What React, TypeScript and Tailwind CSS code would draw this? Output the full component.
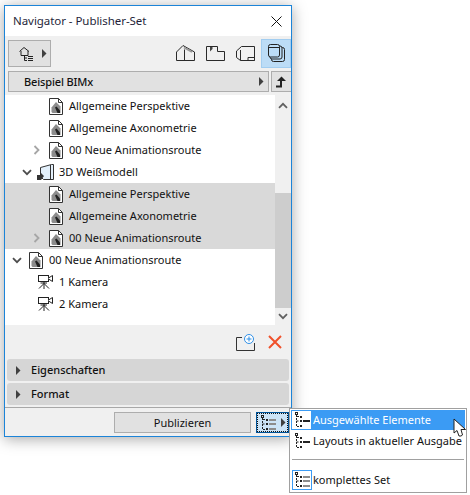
import React from 'react';

const DocIcon = () => (
  <svg width="14" height="17" viewBox="0 0 14 17" fill="none">
    <path d="M.5.5H9.5L13.5 4.5V16.5H.5Z" fill="#fff" stroke="#333" />
    <path d="M9.5.5V4.5H13.5" stroke="#333" />
    <path d="M2.5 14V9.5L7 4L11.5 8.5V15H3.5Z" fill="#8c8c8c" />
    <path d="M6 9.5L7.5 8.5L11 12.5V15H8.5Z" fill="#222" />
  </svg>
);

const ModelIcon = () => (
  <svg width="18" height="17" viewBox="0 0 18 17" fill="none" className="-ml-[3px]">
    <path d="M4.5 3.5L15.5.5H17.5V15.5H7.5L4.5 12.5Z" fill="#e3f0fb" stroke="#333" />
    <path d="M14.5 1V15" stroke="#333" />
    <path d="M1 11H5V9L8 12L5 16H1Z" fill="#333" />
  </svg>
);

const CameraIcon = () => (
  <svg width="17" height="16" viewBox="0 0 17 16" fill="none" className="-ml-[2px]">
    <rect x="1.5" y="1.5" width="10" height="6" stroke="#222" fill="#fff" />
    <path d="M11.5 4L15.5 1.5V7.5L11.5 5" stroke="#222" fill="#fff" />
    <path d="M7 8V15M7 9.5L2 14.5M7 9.5L12 14.5" stroke="#222" />
    <path d="M3.5 9H10" stroke="#222" />
  </svg>
);

const ChevronRight = () => (
  <svg width="8" height="10" viewBox="0 0 8 10" fill="none" className="ml-[1px]">
    <path d="M1.5 1L5.5 5L1.5 9" stroke="#a6a6a6" strokeWidth="1.8" />
  </svg>
);

const ChevronDown = () => (
  <svg width="10" height="7" viewBox="0 0 10 7" fill="none">
    <path d="M1 1.2L5 5.2L9 1.2" stroke="#4d4d4d" strokeWidth="1.8" />
  </svg>
);

const Tri = ({ className = '' }: { className?: string }) => (
  <svg width="5" height="9" viewBox="0 0 5 9" className={className}>
    <path d="M0 0L4.5 4.5L0 9Z" fill="#404040" />
  </svg>
);

// small tree-list glyph, used in the publish button and in the popup
const ListIcon = ({ dark = false }: { dark?: boolean }) => {
  const line = '#222';
  return (
    <svg width="16" height="16" viewBox="0 0 16 16" fill="none">
      <rect x="1.5" y=".5" width="2" height="2" stroke={line} />
      <path d="M2.5 3V14.5H5M2.5 9H5" stroke={line} strokeDasharray="2 1" />
      <path d="M2 4.5H5" stroke={line} />
      <rect x="6" y="4" width="2" height="2" fill={line} />
      <rect x="6" y="8" width="2" height="2" fill={line} />
      <rect x="6" y="13" width="2" height="2" fill={line} />
      {dark ? (
        <path d="M9 9H16" stroke="#222" strokeWidth="2" />
      ) : (
        <path d="M9 5H16M9 9H16M9 14H16" stroke="#8c8c8c" strokeWidth="2" />
      )}
    </svg>
  );
};

const rows = [
  { label: 'Allgemeine Perspektive', pl: 'pl-[27px]', icon: <DocIcon /> },
  { label: 'Allgemeine Axonometrie', pl: 'pl-[27px]', icon: <DocIcon /> },
  { label: '00 Neue Animationsroute', pl: 'pl-[27px]', icon: <DocIcon />, chev: <ChevronRight /> },
  { label: '3D Weißmodell', pl: 'pl-[17px]', icon: <ModelIcon />, chev: <ChevronDown /> },
  { label: 'Allgemeine Perspektive', pl: 'pl-[27px]', icon: <DocIcon />, sel: true },
  { label: 'Allgemeine Axonometrie', pl: 'pl-[27px]', icon: <DocIcon />, sel: true },
  { label: '00 Neue Animationsroute', pl: 'pl-[27px]', icon: <DocIcon />, chev: <ChevronRight />, sel: true },
  { label: '00 Neue Animationsroute', pl: 'pl-[7px]', icon: <DocIcon />, chev: <ChevronDown /> },
  { label: '1 Kamera', pl: 'pl-[17px]', icon: <CameraIcon /> },
  { label: '2 Kamera', pl: 'pl-[17px]', icon: <CameraIcon /> },
];

export default function App() {
  return (
    <div className="relative w-[470px] h-[495px] bg-white pt-[5px] pl-[4px] overflow-hidden text-[11px] text-[#111] font-['Noto_Sans','Open_Sans',sans-serif]">
      {/* Navigator window */}
      <div className="w-[288px] h-[432px] border border-[#1c84d8] bg-[#f0f0f0] flex flex-col shadow-[0_2px_14px_rgba(0,0,0,0.35)]">
        {/* title bar */}
        <div className="h-[30px] shrink-0 bg-white flex items-center justify-between pl-[8px] pr-[9px]">
          <span className="text-[#1f1f3a] text-[11.5px] tracking-[-0.05px]">Navigator - Publisher-Set</span>
          <svg width="11" height="11" viewBox="0 0 11 11" fill="none">
            <path d="M.5.5L10.5 10.5M10.5.5L.5 10.5" stroke="#111" />
          </svg>
        </div>

        {/* view switcher */}
        <div className="h-[30px] shrink-0 flex items-center pl-[3px] mt-[2px]">
          <div className="w-[43px] h-[27px] bg-[#e1e1e1] border border-[#adadad] flex items-center pl-[10px] gap-[8px]">
            <svg width="15" height="17" viewBox="0 0 15 17" fill="none">
              <path d="M.5 6.5L5 2.5L10 6.5M2 6V10.5H9V6" stroke="#222" />
              <path d="M5.5 11V15.5H8M5.5 13H8" stroke="#222" />
              <path d="M9 11.5H14M9 13.5H14M9 15.5H14" stroke="#222" />
            </svg>
            <Tri />
          </div>
          <div className="flex items-center ml-auto">
            <svg width="19" height="16" viewBox="0 0 19 16" fill="none" className="mr-[11px]">
              <path d="M.5 7L7 .5L18.5 7V15.5H.5ZM8.5 4.5V15.5" stroke="#2a2a2a" />
              <path d="M8 2.5L16 7" stroke="#999" strokeWidth="2" />
            </svg>
            <svg width="19" height="15" viewBox="0 0 19 15" fill="none" className="mr-[11px]">
              <path d="M.5.5H11.5V5.5H18.5V14.5H.5Z" stroke="#2a2a2a" />
              <path d="M4 1V5.5L6.5 3V1Z" fill="#444" />
            </svg>
            <svg width="19" height="16" viewBox="0 0 19 16" fill="none" className="mr-[6px]">
              <path d="M5.5 1.5H18.5V15.5H4.5L.5 12.5V6Z" stroke="#2a2a2a" />
              <path d="M4.5 5V15.5M12 12.5H18.5V15.5M12 12.5V15.5" stroke="#2a2a2a" />
            </svg>
            <div className="w-[30px] h-[29px] bg-[#bcdcf6] border border-[#a2cdf0] flex items-center justify-center">
              <svg width="17" height="18" viewBox="0 0 17 18" fill="none">
                <rect x="3.5" y="3.5" width="13" height="14" rx="2" stroke="#222" />
                <rect x="2" y="2" width="12" height="13" rx="2" fill="#bcdcf6" stroke="#222" />
                <rect x=".5" y=".5" width="11" height="12.5" rx="2" fill="#bcdcf6" stroke="#222" />
                <path d="M1 3.5H11" stroke="#222" />
              </svg>
            </div>
          </div>
        </div>

        {/* set selector */}
        <div className="h-[21px] shrink-0 flex pl-[3px] mt-[3px] gap-[2px]">
          <div className="flex-1 bg-[#e1e1e1] border border-[#adadad] flex items-center justify-between pl-[15px] pr-[4px]">
            <span className="font-medium pt-[1px] tracking-[-0.15px]">Beispiel BIMx</span>
            <Tri />
          </div>
          <div className="w-[20px] bg-[#e1e1e1] border border-[#adadad] border-r-0 flex items-center justify-center">
            <svg width="12" height="12" viewBox="0 0 12 12" fill="none">
              <path d="M0 10.5H5V3" stroke="#222" strokeWidth="2" />
              <path d="M1 5L5.5 .5L10 5Z" fill="#222" />
            </svg>
          </div>
        </div>

        {/* tree + scrollbar */}
        <div className="h-[230px] shrink-0 mt-[3px] flex">
          <div className="w-[270px] bg-white">
            {rows.map((r, i) => (
              <div key={i} className={`h-[22px] flex items-center ${r.pl} ${r.sel ? 'bg-[#d9d9d9]' : ''}`}>
                <div className="w-[17px] shrink-0 flex items-center">{r.chev}</div>
                <div className="w-[20px] shrink-0 flex items-center">{r.icon}</div>
                <span className="whitespace-nowrap pt-[1px]">{r.label}</span>
              </div>
            ))}
          </div>
          <div className="flex-1 flex flex-col bg-[#f0f0f0]">
            <div className="h-[20px] flex items-center justify-center">
              <svg width="10" height="7" viewBox="0 0 10 7" fill="none">
                <path d="M1 5.8L5 1.8L9 5.8" stroke="#606060" strokeWidth="1.8" />
              </svg>
            </div>
            <div className="h-[78px]" />
            <div className="h-[115px] bg-[#cdcdcd]" />
            <div className="flex-1 flex items-center justify-center">
              <svg width="10" height="7" viewBox="0 0 10 7" fill="none">
                <path d="M1 1.2L5 5.2L9 1.2" stroke="#606060" strokeWidth="1.8" />
              </svg>
            </div>
          </div>
        </div>

        {/* add / delete */}
        <div className="h-[34px] shrink-0 flex items-center justify-end pr-[9px] gap-[13px]">
          <svg width="19" height="17" viewBox="0 0 19 17" fill="none">
            <path d="M6 3.5H.5V16.5H18.5V9" stroke="#333" />
            <circle cx="13" cy="5" r="4.5" fill="#fff" stroke="#2f8fe6" />
            <path d="M10.5 5H15.5M13 2.5V7.5" stroke="#2f8fe6" />
          </svg>
          <svg width="14" height="14" viewBox="0 0 14 14" fill="none">
            <path d="M1 1L13 13M13 1L1 13" stroke="#f0512b" strokeWidth="2" />
          </svg>
        </div>

        {/* collapsed panels */}
        <div className="flex flex-col gap-[2px] px-[2px]">
          {['Eigenschaften', 'Format'].map((t) => (
            <div key={t} className="h-[22px] bg-[#d6d6d6] rounded-[3px] flex items-center pl-[9px] gap-[10px] font-medium">
              <Tri />
              <span className="pt-[1px]">{t}</span>
            </div>
          ))}
        </div>

        {/* bottom bar */}
        <div className="mt-[2px] flex-1 border-t border-[#a8a8a8] flex items-start pt-[4px] pl-[109px] gap-[5px]">
          <div className="w-[137px] h-[21px] bg-[#e1e1e1] border border-[#adadad] flex items-center justify-center pt-[1px]">
            Publizieren
          </div>
          <div className="w-[33px] h-[21px] bg-[#cce4f7] border border-[#005499] flex items-center pl-[3px] gap-[5px] outline outline-dotted outline-[#111] -outline-offset-2">
            <ListIcon />
            <Tri />
          </div>
        </div>
      </div>

      {/* popup menu */}
      <div className="absolute left-[289px] top-[408px] w-[178px] h-[85px] bg-white border border-[#a0a0a0] pt-[1px] px-[1px]">
        <div className="h-[20px] bg-[#3b9bf4] text-white flex items-center gap-[2px] border border-[#3b9bf4]">
          <div className="bg-white w-[19px] h-[18px] flex items-center justify-center">
            <ListIcon dark />
          </div>
          <span className="pt-[1px]">Ausgewählte Elemente</span>
        </div>
        <div className="h-[20px] mt-[1px] flex items-center pl-[1px] gap-[2px]">
          <div className="w-[19px] flex items-center justify-center">
            <ListIcon dark />
          </div>
          <span className="whitespace-nowrap pt-[1px]">Layouts in aktueller Ausgabe</span>
        </div>
        <div className="h-px bg-[#a0a0a0] mt-[8px] mx-[1px]" />
        <div className="h-[20px] mt-[10px] flex items-center pl-[1px] gap-[1px]">
          <div className="w-[20px] h-[20px] border border-[#3b9bf4] flex items-center justify-center">
            <ListIcon />
          </div>
          <span className="pt-[1px]">komplettes Set</span>
        </div>
      </div>

      {/* mouse pointer */}
      <svg width="14" height="21" viewBox="0 0 14 21" className="absolute left-[453px] top-[418px]">
        <path d="M1 1V15L4 12.5L6 18H8L9.5 17L8 11.5H12.5Z" fill="#fff" stroke="#222" strokeLinejoin="round" />
      </svg>
    </div>
  );
}
